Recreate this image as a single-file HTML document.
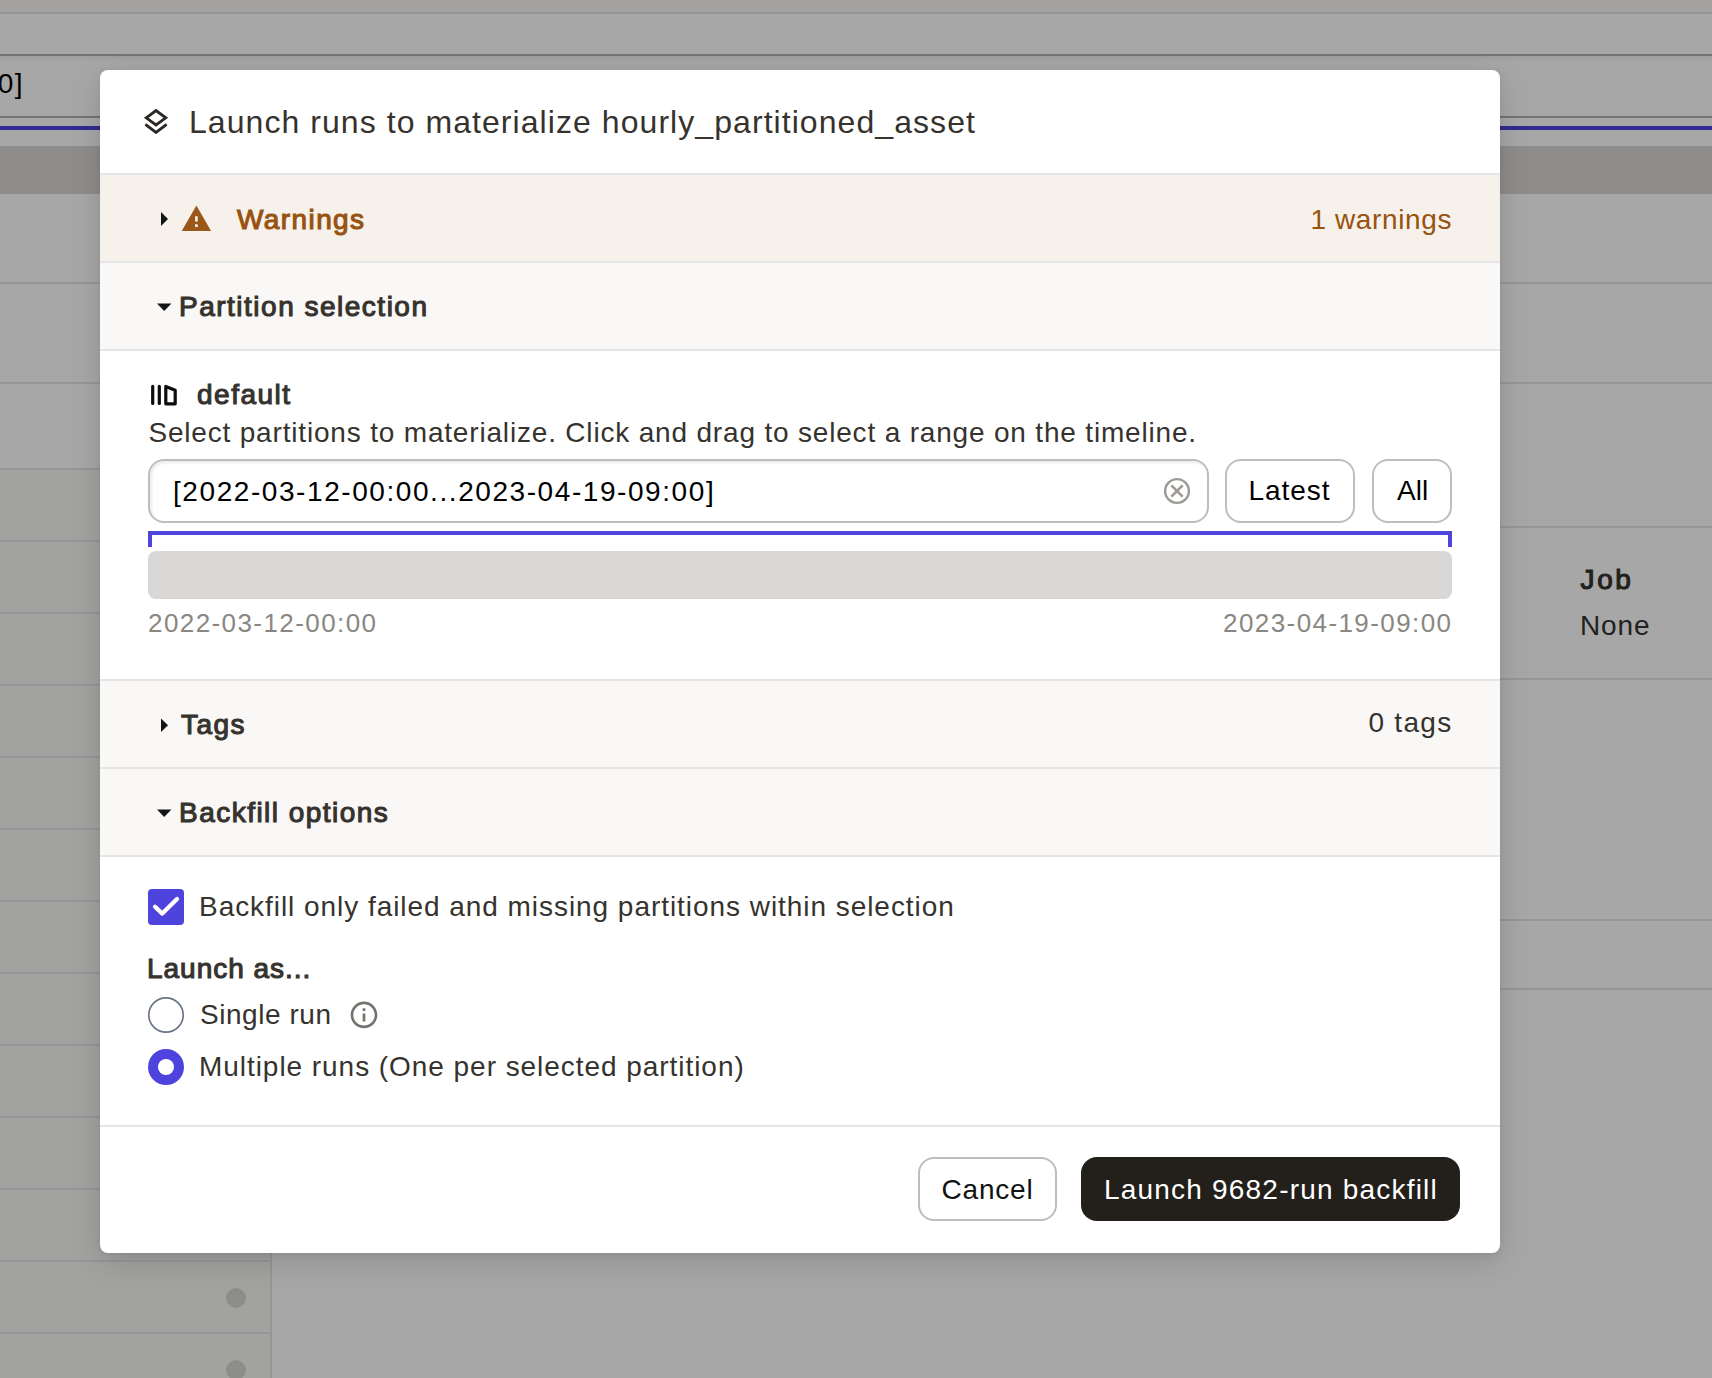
<!DOCTYPE html>
<html>
<head>
<meta charset="utf-8">
<style>
html,body{margin:0;padding:0;width:1712px;height:1378px;overflow:hidden;background:#fff;}
body{position:relative;font-family:"Liberation Sans",sans-serif;color:#36322d;}
.a{position:absolute;}
.t{position:absolute;white-space:nowrap;line-height:28px;font-size:28px;}
.b{font-weight:400;-webkit-text-stroke:1.1px currentColor;}
.hl{position:absolute;height:2px;background:#e5e5e6;}
</style>
</head>
<body>
<!-- ===== background page ===== -->
<div class="a" style="left:0;top:0;width:1712px;height:12px;background:#f9f8f6"></div>
<div class="hl" style="left:0;top:12px;width:1712px;"></div>
<div class="hl" style="left:0;top:54px;width:1712px;background:#b2b1b0"></div>
<div class="a" style="left:0;top:56px;width:1712px;height:6px;background:linear-gradient(rgba(0,0,0,0.05),rgba(0,0,0,0))"></div>
<div class="t" style="right:1688px;top:70px;color:#000;letter-spacing:1.5px">2023-04-19-09:00]</div>
<div class="hl" style="left:0;top:116px;width:1712px;background:#b2b1b0"></div>
<div class="a" style="left:0;top:126px;width:1712px;height:4px;background:#4f43dd"></div>
<div class="a" style="left:0;top:146px;width:1712px;height:48px;background:#d9d8d6"></div>
<div class="hl" style="left:0;top:282px;width:1712px;"></div>
<div class="hl" style="left:0;top:382px;width:1712px;"></div>
<!-- left list -->
<div class="a" style="left:0;top:468px;width:271px;height:910px;background:#f8f7f5"></div>
<div class="a" style="left:270px;top:468px;width:2px;height:910px;background:#e5e5e6"></div>
<div class="hl" style="left:0;top:468px;width:271px;"></div>
<div class="hl" style="left:0;top:540px;width:271px;"></div>
<div class="hl" style="left:0;top:612px;width:271px;"></div>
<div class="hl" style="left:0;top:684px;width:271px;"></div>
<div class="hl" style="left:0;top:756px;width:271px;"></div>
<div class="hl" style="left:0;top:828px;width:271px;"></div>
<div class="hl" style="left:0;top:900px;width:271px;"></div>
<div class="hl" style="left:0;top:972px;width:271px;"></div>
<div class="hl" style="left:0;top:1044px;width:271px;"></div>
<div class="hl" style="left:0;top:1116px;width:271px;"></div>
<div class="hl" style="left:0;top:1188px;width:271px;"></div>
<div class="hl" style="left:0;top:1260px;width:271px;"></div>
<div class="hl" style="left:0;top:1332px;width:271px;"></div>
<div class="a" style="left:226px;top:1288px;width:20px;height:20px;border-radius:50%;background:#d9d8d6"></div>
<div class="a" style="left:226px;top:1360px;width:20px;height:20px;border-radius:50%;background:#d9d8d6"></div>
<!-- right details -->
<div class="hl" style="left:1480px;top:526px;width:232px;"></div>
<div class="hl" style="left:1480px;top:678px;width:232px;"></div>
<div class="hl" style="left:1480px;top:919px;width:232px;"></div>
<div class="hl" style="left:1480px;top:988px;width:232px;"></div>
<div class="t b" style="left:1580.6px;top:566px;letter-spacing:2.6px">Job</div>
<div class="t" style="left:1580px;top:612px;letter-spacing:0.9px">None</div>

<!-- overlay -->
<div class="a" style="left:0;top:0;width:1712px;height:1378px;background:rgba(0,0,0,0.345)"></div>

<!-- ===== dialog ===== -->
<div class="a" style="left:100px;top:70px;width:1400px;height:1183px;background:#fff;border-radius:8px;box-shadow:0 8px 32px rgba(0,0,0,0.14), 0 2px 6px rgba(0,0,0,0.06);"></div>

<!-- header -->
<svg class="a" style="left:0;top:0" width="1712" height="1378" viewBox="0 0 1712 1378">
  <path d="M146.2 117.8 L156 110.6 L165.8 117.8 L156 125 Z" fill="none" stroke="#2b2824" stroke-width="2.8"/>
  <path d="M145.4 124.4 L156 132.4 L166.6 124.4" fill="none" stroke="#2b2824" stroke-width="2.8"/>
</svg>
<div class="t" style="left:189px;top:106px;font-size:32px;line-height:32px;letter-spacing:1.06px;">Launch runs to materialize hourly_partitioned_asset</div>
<div class="hl" style="left:100px;top:173px;width:1400px;"></div>

<!-- warnings -->
<div class="a" style="left:100px;top:175px;width:1400px;height:86px;background:#f6f1eb"></div>
<div class="hl" style="left:100px;top:261px;width:1400px;"></div>
<!-- partition selection header -->
<div class="a" style="left:100px;top:263px;width:1400px;height:86px;background:#f9f8f6"></div>
<div class="hl" style="left:100px;top:349px;width:1400px;"></div>
<!-- tags header -->
<div class="hl" style="left:100px;top:679px;width:1400px;"></div>
<div class="a" style="left:100px;top:681px;width:1400px;height:86px;background:#f9f8f6"></div>
<div class="hl" style="left:100px;top:767px;width:1400px;"></div>
<div class="a" style="left:100px;top:769px;width:1400px;height:86px;background:#f9f8f6"></div>
<div class="hl" style="left:100px;top:855px;width:1400px;"></div>
<div class="hl" style="left:100px;top:1125px;width:1400px;"></div>

<svg class="a" style="left:0;top:0" width="1712" height="1378" viewBox="0 0 1712 1378">
  <!-- carets -->
  <path d="M161 212 L168 219 L161 226 Z" fill="#141414"/>
  <path d="M157 303.4 L171.4 303.4 L164.2 311 Z" fill="#141414"/>
  <path d="M161 718.4 L168 725.2 L161 732 Z" fill="#141414"/>
  <path d="M157 809.5 L171.4 809.5 L164.2 817 Z" fill="#141414"/>
  <!-- warning icon -->
  <g transform="translate(180.4 202.9) scale(1.3333)"><path d="M1 21h22L12 2 1 21zm12-3h-2v-2h2v2zm0-4h-2v-4h2v4z" fill="#9a5717"/></g>
  <!-- partition icon -->
  <g fill="none" stroke="#0f0d0b" stroke-width="3.2" stroke-linecap="round" stroke-linejoin="round">
    <path d="M152.7 386.4 V403.4"/>
    <path d="M159.3 386.4 V403.4"/>
    <path d="M165.8 386.4 L175.2 390.2 V403.8 H165.8 Z"/>
  </g>
  <!-- clear icon -->
  <circle cx="1177" cy="491" r="11.9" fill="none" stroke="#9d9994" stroke-width="2.4"/><path d="M1171.4 485.4 L1182.6 496.6 M1182.6 485.4 L1171.4 496.6" stroke="#9d9994" stroke-width="2.7"/>
  <!-- info icon -->
  <g transform="translate(348 998.9) scale(1.3333)"><path d="M11 7h2v2h-2zm0 4h2v6h-2zm1-9C6.48 2 2 6.48 2 12s4.48 10 10 10 10-4.48 10-10S17.52 2 12 2zm0 18c-4.41 0-8-3.59-8-8s3.59-8 8-8 8 3.59 8 8-3.59 8-8 8z" fill="#76736e"/></g>
  <!-- bracket -->
  <path d="M150 547 V533 H1450 V547" fill="none" stroke="#4f43dd" stroke-width="4"/>
  <!-- checkbox -->
  <rect x="148" y="889" width="36" height="36" rx="4" fill="#4f43dd"/>
  <path d="M155 906.8 L162.3 913.6 L177 899" fill="none" stroke="#fff" stroke-width="4.2" stroke-linecap="round" stroke-linejoin="round"/>
  <!-- radios -->
  <circle cx="166" cy="1015" r="17.2" fill="#fff" stroke="#697587" stroke-width="1.7"/>
  <circle cx="166" cy="1067" r="18" fill="#4f43dd"/>
  <circle cx="166" cy="1067" r="8" fill="#fff"/>
</svg>

<div class="t b" style="left:237px;top:206px;color:#97530f;letter-spacing:1.41px">Warnings</div>
<div class="t" style="right:260px;top:206px;color:#97530f;letter-spacing:0.62px">1 warnings</div>
<div class="t b" style="left:179px;top:293px;letter-spacing:1.5px">Partition selection</div>

<div class="t b" style="left:197px;top:381px;letter-spacing:1.5px">default</div>
<div class="t" style="left:148.4px;top:419px;letter-spacing:0.82px">Select partitions to materialize. Click and drag to select a range on the timeline.</div>

<div class="a" style="left:148px;top:459px;width:1057px;height:60px;border:2px solid #bfbebb;border-radius:16px;box-shadow:inset 2px 2px 3px rgba(0,0,0,0.08);"></div>
<div class="t" style="left:173px;top:478px;color:#000;letter-spacing:1.57px">[2022-03-12-00:00...2023-04-19-09:00]</div>
<div class="a" style="left:1225px;top:459px;width:126px;height:60px;border:2px solid #bfbebb;border-radius:16px;"></div>
<div class="t" style="left:1248.5px;top:477px;color:#000;letter-spacing:0.94px">Latest</div>
<div class="a" style="left:1372px;top:459px;width:76px;height:60px;border:2px solid #bfbebb;border-radius:16px;"></div>
<div class="t" style="left:1397px;top:477px;color:#000;">All</div>

<div class="a" style="left:148px;top:551px;width:1304px;height:48px;border-radius:8px;background:#d9d8d6"></div>
<div class="t" style="left:148px;top:610px;font-size:26px;line-height:26px;color:#8a8782;letter-spacing:1.42px">2022-03-12-00:00</div>
<div class="t" style="right:259.5px;top:610px;font-size:26px;line-height:26px;color:#8a8782;letter-spacing:1.42px">2023-04-19-09:00</div>

<div class="t b" style="left:181px;top:711px;letter-spacing:1.48px">Tags</div>
<div class="t" style="right:259.5px;top:709px;letter-spacing:1.3px">0 tags</div>
<div class="t b" style="left:179px;top:799px;letter-spacing:1.47px">Backfill options</div>

<div class="t" style="left:199px;top:893px;letter-spacing:0.95px">Backfill only failed and missing partitions within selection</div>
<div class="t b" style="left:147px;top:955px;letter-spacing:0.97px">Launch as...</div>
<div class="t" style="left:200px;top:1001px;letter-spacing:0.55px">Single run</div>
<div class="t" style="left:199px;top:1053px;letter-spacing:0.95px">Multiple runs (One per selected partition)</div>

<!-- footer -->
<div class="a" style="left:918px;top:1157px;width:135px;height:60px;border:2px solid #bfbebb;border-radius:16px;"></div>
<div class="t" style="left:941.5px;top:1176px;color:#111;letter-spacing:0.8px">Cancel</div>
<div class="a" style="left:1081px;top:1157px;width:379px;height:64px;background:#231f1b;border-radius:16px;"></div>
<div class="t" style="left:1104px;top:1176px;color:#fff;letter-spacing:1.2px">Launch 9682-run backfill</div>
</body>
</html>
